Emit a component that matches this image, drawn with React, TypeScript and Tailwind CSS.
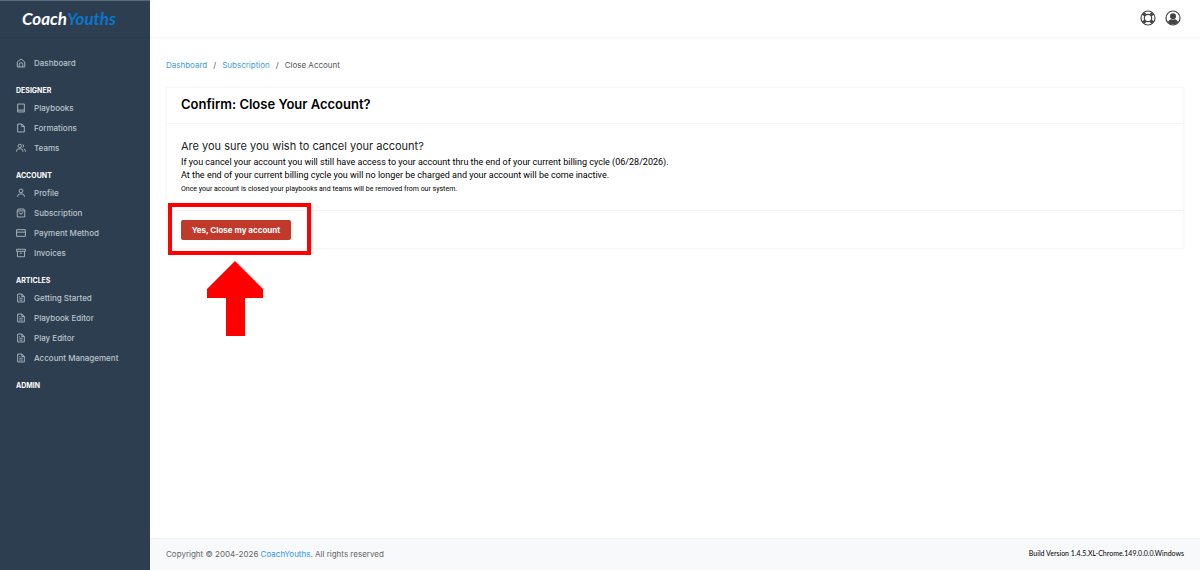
import type { ReactNode } from "react";

type NavItem = { label: string; icon: string };
type NavSection = { title?: string; items: NavItem[] };

// 24x24 outlines, stroked in the text colour
const HOME = "M3 9.500L12 2.500l9 7V21.500H3zM8 21.500v-6.500a4 4 0 0 1 8 0V21.500";
const BOOK = "M4 2.500h16v19H4zM4 17h16";
const FILE = "M4 2.500h10l6 6v13H4zM14 2.500v6h6";
const TEAM =
    "M1.500 21v-2a5 5 0 0 1 5-5h5a5 5 0 0 1 5 5v2M9 3a4 4 0 1 1 0 8a4 4 0 1 1 0-8M15.500 3.200a4 4 0 0 1 0 7.600M19 14.500a4.500 4.500 0 0 1 3.500 4.500v2";
const PROFILE = "M4 21.500v-2a5 5 0 0 1 5-5h6a5 5 0 0 1 5 5v2M12 2.500a4.500 4.500 0 1 1 0 9a4.500 4.500 0 1 1 0-9";
const BAG = "M5 2.500h14l2 4v15H3v-15zM3 7h18M8 10.500a4 4 0 0 0 8 0";
const CARD = "M1.500 4h21v16h-21zM1.500 10h21";
const ARCHIVE = "M1.500 3h21v5h-21zM3.500 8v13h17V8M9.500 12.500h5";
const ARTICLE = "M4 2.500h10l6 6v13H4zM14 2.500v6h6M8 12.500h8M8 17h8M8 8.500h2";

const sections: NavSection[] = [
    { items: [{ label: "Dashboard", icon: HOME }] },
    {
        title: "Designer",
        items: [
            { label: "Playbooks", icon: BOOK },
            { label: "Formations", icon: FILE },
            { label: "Teams", icon: TEAM },
        ],
    },
    {
        title: "Account",
        items: [
            { label: "Profile", icon: PROFILE },
            { label: "Subscription", icon: BAG },
            { label: "Payment Method", icon: CARD },
            { label: "Invoices", icon: ARCHIVE },
        ],
    },
    {
        title: "Articles",
        items: [
            { label: "Getting Started", icon: ARTICLE },
            { label: "Playbook Editor", icon: ARTICLE },
            { label: "Play Editor", icon: ARTICLE },
            { label: "Account Management", icon: ARTICLE },
        ],
    },
    { title: "Admin", items: [] },
];

function Sidebar() {
    return (
        <aside className="w-[150px] shrink-0 border-t border-[#566d80] bg-[#2d3e50]">
            <a
                href="#"
                className="flex h-[37px] items-center border-b border-[#2a3a4b] pl-[22px] font-['Lato','Liberation_Sans',sans-serif] text-[17px] font-bold italic"
            >
                <span className="text-white">Coach</span>
                <span className="text-[#0b76c9]">Youths</span>
            </a>
            <nav className="pt-[15px]">
                {sections.map((section) => (
                    <div key={section.title ?? "main"}>
                        {section.title && (
                            <h2 className="pt-[11px] pl-4 text-[7px] leading-[14px] font-bold text-white uppercase">
                                {section.title}
                            </h2>
                        )}
                        <ul>
                            {section.items.map(({ label, icon }) => (
                                <li key={label}>
                                    <a
                                        href="#"
                                        className="flex h-5 items-center gap-2 pl-4 text-[8px] font-medium text-[#bcc4cd]"
                                    >
                                        <svg
                                            viewBox="0 0 24 24"
                                            className="size-[10px] shrink-0"
                                            fill="none"
                                            stroke="currentColor"
                                            strokeWidth="2"
                                            strokeLinejoin="round"
                                        >
                                            <path d={icon} />
                                        </svg>
                                        {label}
                                    </a>
                                </li>
                            ))}
                        </ul>
                    </div>
                ))}
            </nav>
        </aside>
    );
}

function IconButton({ label, children }: { label: string; children: ReactNode }) {
    return (
        <button type="button" aria-label={label} className="size-4 text-[#444]">
            {children}
        </button>
    );
}

function Header() {
    return (
        <header className="flex h-[38px] items-start justify-end gap-[9px] border-b border-[#f7f7f7] pt-[10px] pr-[19px] shadow-[0_1px_2px_rgba(0,0,0,0.02)]">
            <IconButton label="Help">
                <svg viewBox="0 0 16 16" fill="none" stroke="currentColor">
                    <circle cx="8" cy="8" r="7" strokeWidth="1.2" />
                    <circle cx="8" cy="8" r="3.7" strokeWidth="1.2" />
                    <path
                        d="M3.400 3.400l2 2M12.600 3.400l-2 2M3.400 12.600l2-2M12.600 12.600l-2-2"
                        strokeWidth="3.4"
                    />
                </svg>
            </IconButton>
            <IconButton label="Account">
                <svg viewBox="0 0 16 16" fill="currentColor">
                    <circle cx="8" cy="8" r="7" fill="none" stroke="currentColor" strokeWidth="1.2" />
                    <circle cx="8" cy="6.3" r="3" />
                    <path d="M2.800 12.200c.8-2 2.400-2.700 3.600-2.900.9.6 2.300.6 3.200 0 1.200.2 2.800.9 3.600 2.900A6.800 6.800 0 0 1 8 14.600a6.800 6.800 0 0 1-5.200-2.400z" />
                </svg>
            </IconButton>
        </header>
    );
}

function Breadcrumb() {
    return (
        <nav aria-label="Breadcrumb" className="text-[8px] leading-4 text-[#555]">
            <ol className="flex gap-[6px]">
                <li>
                    <a href="#" className="text-[#3f9adb]">
                        Dashboard
                    </a>
                </li>
                <li aria-hidden="true">/</li>
                <li>
                    <a href="#" className="text-[#3f9adb]">
                        Subscription
                    </a>
                </li>
                <li aria-hidden="true">/</li>
                <li aria-current="page">Close Account</li>
            </ol>
        </nav>
    );
}

// red box and arrow that point out the button
function Callout() {
    return (
        <>
            <div className="pointer-events-none absolute -top-[17px] -left-[13px] h-[52px] w-[143px] border-4 border-[#fe0000]" />
            <svg
                viewBox="0 0 57 75"
                className="pointer-events-none absolute top-[41px] left-[26px] h-[75px] w-[57px]"
                fill="#fe0000"
            >
                <path d="M28 0L56 28V37H38V75H19V37H0V28z" />
            </svg>
        </>
    );
}

function CloseAccountCard() {
    return (
        <section className="mt-[14px] border border-[#f7f7f7] bg-white text-black shadow-[0_0_3px_rgba(0,0,0,0.04)]">
            <h1 className="border-b border-[#f5f5f5] px-[14px] pt-1 pb-[7px] text-[13px] leading-6 font-semibold">
                Confirm: Close Your Account?
            </h1>
            <div className="px-[14px] pt-[13px] pb-[14px] font-['Roboto','Liberation_Sans',sans-serif]">
                <h2 className="font-['Inter','Liberation_Sans',sans-serif] text-[11px] leading-[19px] text-[#222]">
                    Are you sure you wish to cancel your account?
                </h2>
                <p className="text-[9px] leading-[13px]">
                    If you cancel your account you will still have access to your account thru the end of your
                    current billing cycle (06/28/2026).
                </p>
                <p className="text-[9px] leading-[13px]">
                    At the end of your current billing cycle you will no longer be charged and your account will
                    be come inactive.
                </p>
                <p className="text-[7px] leading-[14px]">
                    Once your account is closed your playbooks and teams will be removed from our system.
                </p>
            </div>
            <div className="border-t border-[#f3f3f3] px-[14px] pt-[9px] pb-2">
                <div className="relative w-fit">
                    <button
                        type="button"
                        className="block h-5 w-[110px] rounded-[2px] bg-[#c0392b] text-[8px] font-bold text-white"
                    >
                        Yes, Close my account
                    </button>
                    <Callout />
                </div>
            </div>
        </section>
    );
}

function Footer() {
    return (
        <footer className="flex h-8 items-center justify-between border-t border-[#f0f2f4] bg-[#f8f9fb] px-4 pb-[2px] text-[8px] text-[#666]">
            <p>
                Copyright © 2004-2026{" "}
                <a href="#" className="text-[#2f95dc]">
                    CoachYouths
                </a>
                . All rights reserved
            </p>
            <p className="font-['Lato','Liberation_Sans',sans-serif] text-[7px] text-black">
                Build Version 1.4.5.XL-Chrome.149.0.0.0.Windows
            </p>
        </footer>
    );
}

export default function App() {
    return (
        <div className="flex min-h-screen bg-white font-['Inter','Liberation_Sans',sans-serif]">
            <Sidebar />
            <div className="flex min-w-0 flex-1 flex-col">
                <Header />
                <main className="flex-1 px-4 pt-[19px]">
                    <Breadcrumb />
                    <CloseAccountCard />
                </main>
                <Footer />
            </div>
        </div>
    );
}
